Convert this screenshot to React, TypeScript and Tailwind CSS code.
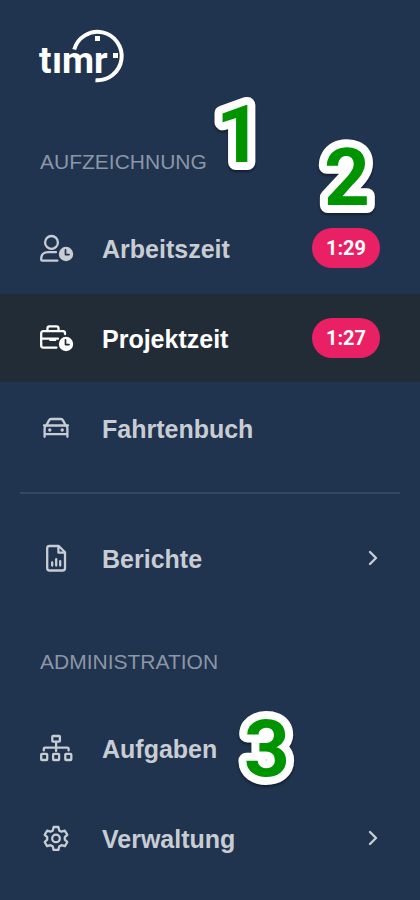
import type { ReactNode } from "react";

function Logo() {
  return (
    <svg width="88" height="56" viewBox="38 28 88 56" role="img" aria-label="timr" className="-ml-0.5 block">
      <path d="M74.2 49.5A24.2 24.2 0 1 1 95.5 80.2" fill="none" stroke="#fff" strokeWidth="4" />
      <rect x="95" y="36" width="5" height="5" fill="#fff" />
      <rect x="113" y="53" width="5" height="5" fill="#fff" />
      <text x="39 52 62 94" y="73" fontSize="37" className="fill-white font-['Roboto',sans-serif] font-bold">
        tımr
      </text>
    </svg>
  );
}

function Clock() {
  return (
    <>
      <circle cx="26" cy="20" r="7.2" fill="currentColor" />
      <path d="M25.5 15.8V20.6H29" fill="none" className="stroke-[#20334f] group-aria-[current=page]:stroke-[#222c36]" strokeWidth="1.7" />
    </>
  );
}

function Icon({ children }: { children: ReactNode }) {
  return (
    <svg
      width="34"
      height="28"
      viewBox="0 0 34 28"
      fill="none"
      stroke="currentColor"
      strokeWidth="2.3"
      strokeLinecap="round"
      strokeLinejoin="round"
      aria-hidden="true"
      className="block shrink-0"
    >
      {children}
    </svg>
  );
}

const UserClock = () => (
  <Icon>
    <circle cx="11.5" cy="8.4" r="6.4" />
    <path d="M16 18.2H8C4 18.2 1.2 20.6 1.2 24.4V25.6C1.2 26.3 1.6 26.7 2.3 26.7H17.4" />
    <g stroke="none"><Clock /></g>
  </Icon>
);

const CaseClock = () => (
  <Icon>
    <path d="M25 10V9.2C25 8 24.2 7.2 23 7.2H3.2C2 7.2 1.2 8 1.2 9.2V21.6C1.2 22.8 2 23.6 3.2 23.6H16.5" />
    <path d="M7.5 7V4.2C7.5 3 8.2 2.3 9.4 2.3H16.6C17.8 2.3 18.5 3 18.5 4.2V7M1.5 14.7H18" />
    <path d="M10 14.7V16.4H15.5V14.7Z" fill="currentColor" strokeWidth="1.4" />
    <g stroke="none"><Clock /></g>
  </Icon>
);

const Car = () => (
  <Icon>
    <path d="M4 11.5H28M6.5 11L9 6.4C9.4 5.5 10.1 5 11.2 5H20.8C21.9 5 22.6 5.5 23 6.4L25.5 11" />
    <path d="M5.5 12C4.8 12.8 4.6 13.7 4.6 14.8V22.8M26.5 12C27.2 12.8 27.4 13.7 27.4 14.8V22.8M4.8 20.2H27.2" />
    <circle cx="9.8" cy="16" r="1" fill="currentColor" strokeWidth="1.4" />
    <circle cx="22.2" cy="16" r="1" fill="currentColor" strokeWidth="1.4" />
  </Icon>
);

const Report = () => (
  <Icon>
    <path d="M18.8 2H9.5C8.1 2 7.2 2.9 7.2 4.3V24.2C7.2 25.6 8.1 26.5 9.5 26.5H22.7C24.1 26.5 25 25.6 25 24.2V8.2ZM18.4 2.4V8.6H24.7" />
    <path d="M12.2 18.5V21.5M16.2 15.2V21.5M20.2 17.2V21.5" />
  </Icon>
);

const Tree = () => (
  <Icon>
    <rect x="12.3" y="2" width="7.6" height="5.6" rx="0.8" />
    <path d="M16.1 7.8V17M3.8 16.4V14.8C3.8 14 4.2 13.6 5 13.6H27.4C28.2 13.6 28.6 14 28.6 14.8V16.4" />
    <rect x="1.2" y="19.8" width="6" height="6.2" rx="0.8" />
    <rect x="13.1" y="19.8" width="6" height="6.2" rx="0.8" />
    <rect x="25.3" y="19.8" width="6" height="6.2" rx="0.8" />
  </Icon>
);

const Gear = () => (
  <Icon>
    <path d="M13.6 3H18.4L19.2 6.4L21.5 7.7L24.9 6.7L27.3 10.9L24.8 13.2V15.6L27.3 18L24.9 22.2L21.5 21.2L19.2 22.5L18.4 25.9H13.6L12.8 22.5L10.5 21.2L7.1 22.2L4.7 18L7.2 15.6V13.2L4.7 10.9L7.1 6.7L10.5 7.7L12.8 6.4Z" />
    <circle cx="16" cy="14.4" r="3.8" />
  </Icon>
);

function Chevron() {
  return (
    <svg width="14" height="20" viewBox="0 0 14 20" fill="none" stroke="currentColor" strokeWidth="2.4" strokeLinecap="round" strokeLinejoin="round" aria-hidden="true" className="block">
      <path d="M4 4L10 10L4 16" />
    </svg>
  );
}

type ItemProps = { icon: ReactNode; label: string; time?: string; active?: boolean; more?: boolean };

function Item({ icon, label, time, active, more }: ItemProps) {
  return (
    <li>
      <a
        href="#"
        aria-current={active ? "page" : undefined}
        className="group flex h-[88px] items-center px-10 text-[#c8cdd4] aria-[current=page]:bg-[#222c36] aria-[current=page]:text-white"
      >
        {icon}
        <span className="ml-7 flex-1 pt-0.5 text-[25px] leading-8 font-bold">{label}</span>
        {time && (
          <span className="rounded-full bg-[#e92063] px-[14px] font-['Roboto',sans-serif] text-[20px] leading-10 font-bold text-white">{time}</span>
        )}
        {more && <Chevron />}
      </a>
    </li>
  );
}

function Heading({ children }: { children: ReactNode }) {
  return <h2 className="px-10 text-[21px] leading-7 text-[#8c96a5]">{children}</h2>;
}

function Marker({ n, place }: { n: number; place: string }) {
  return (
    <svg width="64" height="80" viewBox="0 0 64 80" className={`pointer-events-none absolute overflow-visible drop-shadow-[0_2px_1px_rgba(0,0,0,0.4)] ${place}`}>
      <text
        x="32"
        y="69"
        textAnchor="middle"
        fontSize="80"
        strokeWidth="16"
        strokeLinejoin="round"
        className="fill-[#009400] stroke-white font-['Roboto',sans-serif] font-bold [paint-order:stroke]"
      >
        {n}
      </text>
    </svg>
  );
}

export default function App() {
  return (
    <nav className="relative min-h-screen bg-[#20334f] pt-7 pb-4 font-['Liberation_Sans',Arial,sans-serif]">
      <div className="px-10">
        <Logo />
      </div>
      <div className="mt-16">
        <Heading>AUFZEICHNUNG</Heading>
      </div>
      <ul className="mt-7 flex flex-col gap-0.5">
        <Item icon={<UserClock />} label="Arbeitszeit" time="1:29" />
        <Item icon={<CaseClock />} label="Projektzeit" time="1:27" active />
        <Item icon={<Car />} label="Fahrtenbuch" />
      </ul>
      <hr className="mx-5 my-5 border-t-2 border-[#364860]" />
      <ul>
        <Item icon={<Report />} label="Berichte" more />
      </ul>
      <div className="mt-[46px]">
        <Heading>ADMINISTRATION</Heading>
      </div>
      <ul className="mt-7 flex flex-col gap-0.5">
        <Item icon={<Tree />} label="Aufgaben" />
        <Item icon={<Gear />} label="Verwaltung" more />
      </ul>
      <Marker n={1} place="left-[207px] top-[93px]" />
      <Marker n={2} place="left-[315px] top-[136px]" />
      <Marker n={3} place="left-[235px] top-[707px]" />
    </nav>
  );
}
